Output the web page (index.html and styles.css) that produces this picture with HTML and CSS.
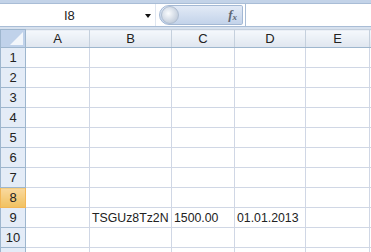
FILE: index.html
```html
<!DOCTYPE html>
<html lang="en">
  <head>
    <meta charset="utf-8" />
    <title>Sheet</title>
    <link rel="stylesheet" href="styles.css">
  </head>
  <body>
    <div class="topbar"></div>
    <div class="formula">
      <div class="namebox">
        <span class="cellname">I8</span>
        <span class="arrow"></span>
      </div>
      <div class="bezel">
        <span class="knob"></span>
        <span class="fx">f<sub>x</sub></span>
      </div>
      <div class="input"></div>
    </div>
    <div class="gap"></div>

    <table class="sheet">
      <colgroup>
        <col class="c-head">
        <col class="c-a">
        <col class="c-b">
        <col class="c-c">
        <col class="c-d">
        <col class="c-e">
        <col class="c-f">
      </colgroup>
      <tr class="colhead">
        <th class="corner"><span class="tri"></span></th>
        <th>A</th><th>B</th><th>C</th><th>D</th><th>E</th><th></th>
      </tr>
      <tr><th>1</th><td></td><td></td><td></td><td></td><td></td><td></td></tr>
      <tr><th>2</th><td></td><td></td><td></td><td></td><td></td><td></td></tr>
      <tr><th>3</th><td></td><td></td><td></td><td></td><td></td><td></td></tr>
      <tr><th>4</th><td></td><td></td><td></td><td></td><td></td><td></td></tr>
      <tr><th>5</th><td></td><td></td><td></td><td></td><td></td><td></td></tr>
      <tr><th>6</th><td></td><td></td><td></td><td></td><td></td><td></td></tr>
      <tr><th>7</th><td></td><td></td><td></td><td></td><td></td><td></td></tr>
      <tr><th class="active">8</th><td></td><td></td><td></td><td></td><td></td><td></td></tr>
      <tr><th>9</th><td></td><td>TSGUz8Tz2N</td><td>1500.00</td><td>01.01.2013</td><td></td><td></td></tr>
      <tr><th>10</th><td></td><td></td><td></td><td></td><td></td><td></td></tr>
      <tr class="last"><th></th><td></td><td></td><td></td><td></td><td></td><td></td></tr>
    </table>
  </body>
</html>
```

FILE: styles.css
```css
body {
  margin: 0;
  width: 371px;
  height: 252px;
  overflow: hidden;
  background: #fff;
  font-family: "Liberation Sans", Arial, sans-serif;
  color: #222;
}

.topbar {
  height: 3px;
  background: #c3d3e8;
  border-bottom: 1px solid #a9bdd6;
}

.formula {
  display: flex;
  height: 22px;
  background: #fff;
}

.namebox {
  width: 155px;
  display: flex;
  align-items: center;
  position: relative;
  border-right: 1px solid #dfe6f0;
}

.cellname {
  font-size: 13px;
  margin-left: 64px;
}

.arrow {
  position: absolute;
  left: 145px;
  top: 10px;
  border-left: 3px solid transparent;
  border-right: 3px solid transparent;
  border-top: 4px solid #111;
}

.bezel {
  width: 84px;
  margin: 1px 0 1px 3px;
  border-radius: 11px 2px 2px 11px;
  background: linear-gradient(#e2eaf6, #c3d3ea);
  border: 1px solid #a3b8d4;
  display: flex;
  align-items: center;
  justify-content: space-between;
  box-sizing: border-box;
}

.knob {
  width: 16px;
  height: 16px;
  margin-left: 1px;
  border-radius: 50%;
  background: radial-gradient(circle at 40% 40%, #fafcfe, #cdd6e2 60%, #b3c0d1);
  border: 1px solid #aebdd1;
}

.fx {
  font-family: "Liberation Serif", serif;
  font-style: italic;
  font-weight: bold;
  font-size: 13px;
  color: #5f6672;
  margin-right: 5px;
}

.fx sub {
  font-size: 9px;
  vertical-align: -1px;
}

.input {
  flex: 1;
  margin-left: 2px;
  border-left: 1px solid #a9bdd6;
}

.gap {
  height: 2px;
  background: #d7e1ee;
  border-top: 1px solid #a9bdd6;
}

.sheet {
  border-collapse: collapse;
  table-layout: fixed;
  width: 371px;
  font-size: 12.3px;
}

.c-head { width: 25px; }
.c-a { width: 64px; }
.c-b { width: 82px; }
.c-c { width: 63px; }
.c-d { width: 71px; }
.c-e { width: 64px; }
.c-f { width: 2px; }

.sheet th,
.sheet td {
  height: 19px;
  padding: 0 0 0 2px;
  border: 1px solid #d0d7e5;
  white-space: nowrap;
  overflow: hidden;
  font-weight: normal;
  text-align: left;
}

.sheet th {
  background: #e4ecf7;
  border-color: #9eb6ce;
  text-align: center;
  padding: 0;
  font-size: 13px;
  color: #222;
}

.colhead th {
  height: 17px;
  background: linear-gradient(#f5f8fc, #dfe6ef);
  border-color: #c5d0dd;
  border-bottom-color: #9eb6ce;
}

.sheet .corner {
  position: relative;
  background: #c0d2ea;
  border-color: #9eb6ce;
}

.tri {
  position: absolute;
  right: 2px;
  bottom: 2px;
  border-left: 13px solid transparent;
  border-bottom: 13px solid #f2f6fb;
}

.sheet th.active {
  background: linear-gradient(#f9d99f, #f1c15f);
  border-color: #f2b657;
}

.last th,
.last td {
  height: 4px;
}
```
